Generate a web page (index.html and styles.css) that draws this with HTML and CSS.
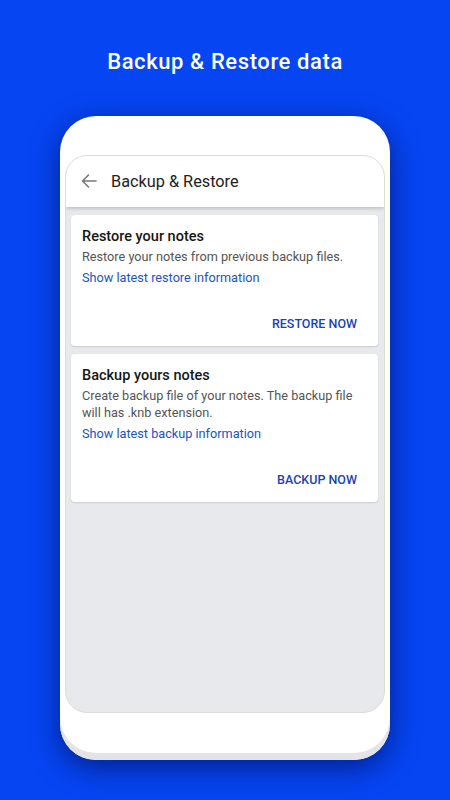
FILE: index.html
```html
<!DOCTYPE html>
<html>
<head>
<meta charset="utf-8">
<link rel="stylesheet" href="styles.css">
</head>
<body>
<h1 class="headline">Backup &amp; Restore data</h1>
<div class="phone">
  <div class="screen">
    <div class="appbar">
      <svg class="back" width="18" height="18" viewBox="0 0 18 18"><path d="M16 9H2.5M8.5 3L2.5 9l6 6" fill="none" stroke="#777" stroke-width="1.6" stroke-linecap="round" stroke-linejoin="round"/></svg>
      <span class="appbar-title">Backup &amp; Restore</span>
    </div>
    <div class="content">
      <div class="card">
        <div class="card-title">Restore your notes</div>
        <div class="card-desc">Restore your notes from previous backup files.</div>
        <div class="card-link">Show latest restore information</div>
        <div class="card-actions"><span class="btn">RESTORE NOW</span></div>
      </div>
      <div class="card">
        <div class="card-title">Backup yours notes</div>
        <div class="card-desc">Create backup file of your notes. The backup file will has .knb extension.</div>
        <div class="card-link">Show latest backup information</div>
        <div class="card-actions"><span class="btn">BACKUP NOW</span></div>
      </div>
    </div>
  </div>
</div>
</body>
</html>
```
FILE: styles.css
```css
html, body {
  margin: 0;
  padding: 0;
}
body {
  width: 450px;
  height: 800px;
  background: #0645f2;
  font-family: Roboto, "Noto Sans", sans-serif;
  display: flex;
  flex-direction: column;
  align-items: center;
  overflow: hidden;
}
.headline {
  margin: 48px 0 0;
  height: 28px;
  line-height: 28px;
  font-size: 22px;
  font-weight: 500;
  letter-spacing: 0.6px;
  color: #fff;
}
.phone {
  margin-top: 40px;
  width: 330px;
  height: 644px;
  box-sizing: border-box;
  padding: 39px 5px 0;
  background: #fff;
  border-radius: 36px;
  box-shadow: inset 0 -7px 0 #e4e4e6, 0 8px 28px rgba(0, 10, 70, 0.6);
}
.screen {
  height: 558px;
  box-sizing: border-box;
  border: 1px solid #dcdcdc;
  border-radius: 22px;
  overflow: hidden;
  display: flex;
  flex-direction: column;
  background: #e8e9ec;
}
.appbar {
  height: 51px;
  flex: none;
  background: #fff;
  display: flex;
  align-items: center;
  padding-left: 14px;
  box-shadow: 0 2px 3px rgba(0, 0, 0, 0.16);
  position: relative;
  z-index: 1;
}
.back {
  margin-right: 13px;
  margin-top: -2px;
}
.appbar-title {
  font-size: 16.3px;
  color: #222;
}
.content {
  flex: 1;
  padding: 8px 6px 0 5px;
  display: flex;
  flex-direction: column;
  gap: 8px;
}
.card {
  background: #fff;
  border-radius: 4px;
  padding: 12px 21px 4px 11px;
  box-shadow: 0 1px 2px rgba(0, 0, 0, 0.12);
}
.card-title {
  font-size: 14.5px;
  line-height: 20px;
  font-weight: 500;
  color: #161616;
}
.card-desc {
  margin-top: 1px;
  font-size: 12.7px;
  line-height: 17.5px;
  color: #555;
}
.card-link {
  margin-top: 3.5px;
  font-size: 12.7px;
  line-height: 17.5px;
  color: #2153c4;
}
.card-actions {
  margin-top: 19px;
  height: 36px;
  display: flex;
  align-items: center;
  justify-content: flex-end;
}
.btn {
  font-size: 12.5px;
  font-weight: 500;
  color: #1c3fb8;
  letter-spacing: 0;
}
```
